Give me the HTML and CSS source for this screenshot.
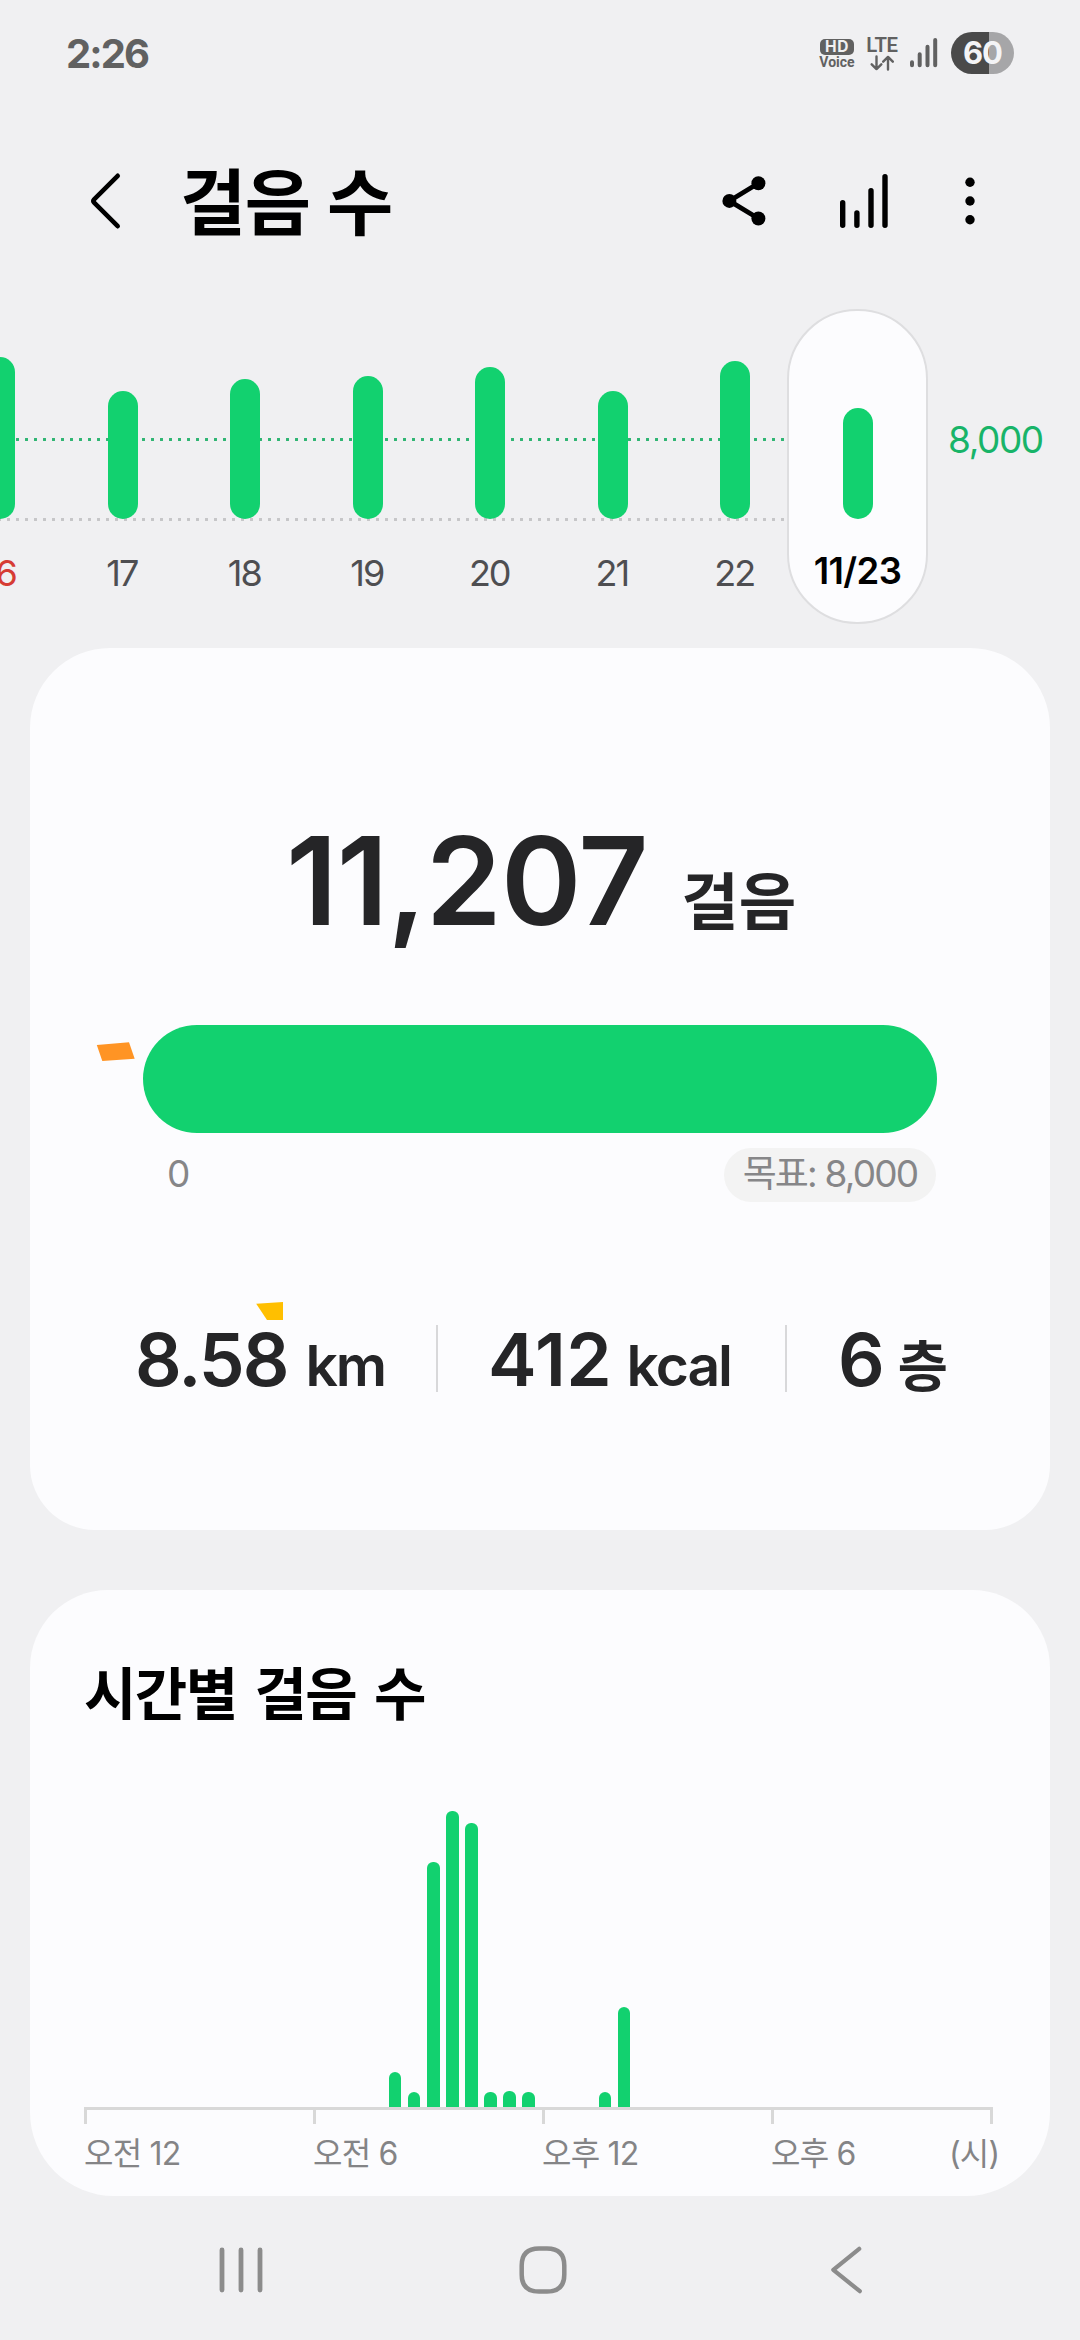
FILE: index.html
```html
<!DOCTYPE html>
<html lang="ko">
<head>
<meta charset="utf-8">
<title>걸음 수</title>
<link rel="stylesheet" href="styles.css">
</head>
<body>
<div class="status">
  <span class="clock">2:26</span>
  <div class="status-icons">
    <div class="hd"><span class="hd-badge">HD</span><span class="hd-voice">Voice</span></div>
    <div class="lte"><span class="lte-text">LTE</span>
      <svg width="24" height="16" viewBox="0 0 24 16" fill="none" stroke="#616161" stroke-width="2.4" stroke-linecap="round" stroke-linejoin="round"><path d="M6.5 1.5V14M1.7 9.3L6.5 14.1L11.3 9.3M18 14.5V2M13.2 6.7L18 1.9L22.8 6.7"/></svg>
    </div>
    <svg class="signal" width="28" height="32" viewBox="0 0 28 32" fill="none" stroke="#616161" stroke-width="4" stroke-linecap="round"><path d="M2 25.2V28.3M9.7 17.3V28.3M17.5 9.7V28.3M25.2 3V28.3"/></svg>
    <div class="battery">60</div>
  </div>
</div>
<header class="header">
  <svg class="back" width="32" height="60" viewBox="0 0 32 60" fill="none" stroke="#000" stroke-width="4.6" stroke-linecap="round" stroke-linejoin="round"><path d="M27.7 4.8L3.9 28.7Q2.6 30 3.9 31.3L27.7 55.2"/></svg>
  <h1 class="title">걸음 수</h1>
  <svg class="share" width="46" height="54" viewBox="0 0 46 54"><path d="M37.4 9.3L8.4 26.9L37.4 44.5" fill="none" stroke="#000" stroke-width="4.8"/><circle cx="37.4" cy="9.3" r="7"/><circle cx="8.4" cy="26.9" r="7"/><circle cx="37.4" cy="44.5" r="7"/></svg>
  <svg class="bars-icon" width="50" height="58" viewBox="0 0 50 58" fill="none" stroke="#000" stroke-width="5.4" stroke-linecap="round"><path d="M3.7 30.7V53.3M17.9 41V53.3M32 18.7V53.3M46 4.7V53.3"/></svg>
  <svg class="more" width="12" height="50" viewBox="0 0 12 50"><circle cx="6" cy="6.3" r="4.7"/><circle cx="6" cy="25" r="4.7"/><circle cx="6" cy="43.7" r="4.7"/></svg>
</header>
<section class="week">
  <div class="days">
    <div class="day sunday"><div class="track"><i style="height:162px"></i></div><span>16</span></div>
    <div class="day"><div class="track"><i style="height:128px"></i></div><span>17</span></div>
    <div class="day"><div class="track"><i style="height:140px"></i></div><span>18</span></div>
    <div class="day"><div class="track"><i style="height:143px"></i></div><span>19</span></div>
    <div class="day"><div class="track"><i style="height:152px"></i></div><span>20</span></div>
    <div class="day"><div class="track"><i style="height:128px"></i></div><span>21</span></div>
    <div class="day"><div class="track"><i style="height:158px"></i></div><span>22</span></div>
  </div>
  <div class="today"><div class="track"><i style="height:111px"></i></div><span>11/23</span></div>
  <span class="goal-line">8,000</span>
</section>
<section class="card summary">
  <div class="total"><span class="total-num">11,207</span><span class="total-unit">걸음</span></div>
  <div class="progress"></div>
  <div class="scale"><span class="zero">0</span><span class="goal">목표: 8,000</span></div>
  <div class="stats">
    <div class="stat distance"><b>8.58</b><span>km</span></div>
    <div class="stat calories"><b>412</b><span>kcal</span></div>
    <div class="stat floors"><b>6</b><span>층</span></div>
  </div>
  <svg class="confetti" width="1020" height="882" viewBox="30 648 1020 882"><path fill="#ff9424" d="M96.8 1045L129 1042.3L134.7 1058.7L102.3 1061Z"/><path fill="#ffbf00" d="M256.2 1303.7L283 1302V1320H267Z"/></svg>
</section>
<section class="card hourly">
  <h2 class="subtitle">시간별 걸음 수</h2>
  <div class="slots">
    <i></i><i></i><i></i><i></i><i></i><i></i><i></i><i></i><i></i><i></i><i></i><i></i><i></i><i></i><i></i><i></i>
    <i style="height:35px"></i><i style="height:14.7px"></i><i style="height:245px"></i><i style="height:296px"></i><i style="height:284px"></i><i style="height:14.7px"></i><i style="height:16px"></i><i style="height:14.7px"></i>
    <i></i><i></i><i></i><i style="height:14.7px"></i><i style="height:100px"></i><i></i><i></i><i></i>
    <i></i><i></i><i></i><i></i><i></i><i></i><i></i><i></i><i></i><i></i><i></i><i></i><i></i><i></i><i></i><i></i>
  </div>
  <div class="axis"><span>오전 12</span><span>오전 6</span><span>오후 12</span><span>오후 6</span><em>(시)</em></div>
</section>
<nav class="nav">
  <svg width="44" height="48" viewBox="0 0 44 48" fill="none" stroke="#8c8c8c" stroke-width="4.8" stroke-linecap="round"><path d="M3 3.9V44.1M22 3.9V44.1M41 3.9V44.1"/></svg>
  <svg width="50" height="48" viewBox="0 0 50 48" fill="none" stroke="#8c8c8c" stroke-width="4.5"><path d="M21 2.4H29Q46.3 2.4 46.3 19.5V28.5Q46.3 45.6 29 45.6H21Q3.7 45.6 3.7 28.5V19.5Q3.7 2.4 21 2.4Z"/></svg>
  <svg width="34" height="48" viewBox="0 0 34 48" fill="none" stroke="#8c8c8c" stroke-width="4.2" stroke-linecap="round" stroke-linejoin="round"><path d="M30.2 2.8L4.3 23.8L30.8 45.2"/></svg>
</nav>
</body>
</html>
```
FILE: styles.css
```css
* { box-sizing: border-box; }
body {
  margin: 0;
  width: 1080px;
  height: 2340px;
  overflow: hidden;
  background: #f0f0f2;
  color: #252527;
  font-family: Inter, "Noto Sans CJK KR", sans-serif;
  display: flex;
  flex-direction: column;
}
svg { display: block; flex: none; }
i, em { font-style: normal; }

/* status bar */
.status {
  flex: none;
  height: 106px;
  padding: 0 66px;
  display: flex;
  justify-content: space-between;
  align-items: center;
}
.clock { font-size: 40px; font-weight: 700; color: #616161; letter-spacing: -1.9px; }
.status-icons { display: flex; align-items: center; }
.hd { width: 34px; margin-right: 12px; padding-top: 3px; display: flex; flex-direction: column; align-items: center; }
.hd-badge {
  width: 34px; height: 16px; border-radius: 5px;
  background: #616161; color: #f0f0f2;
  font-size: 15.5px; line-height: 16px; font-weight: 700; text-align: center; letter-spacing: .5px;
}
.hd-voice { font-family: Roboto, sans-serif; font-size: 14px; line-height: 14.6px; font-weight: 700; color: #616161; }
.lte { width: 32px; margin-right: 11.5px; display: flex; flex-direction: column; align-items: center; }
.lte-text { font-family: Roboto, sans-serif; font-size: 20.3px; line-height: 18px; font-weight: 600; color: #616161; letter-spacing: -.4px; }
.lte svg { margin-top: 1px; }
.signal { margin-right: 13.5px; }
.battery {
  width: 63px; height: 42px; border-radius: 21px;
  background: linear-gradient(90deg, #4a4a4a 38px, #a6a6a8 38px);
  color: #f4f4f6; font-size: 31px; line-height: 41px; font-weight: 700; text-align: center; letter-spacing: -1px;
}

/* title bar */
.header { flex: none; height: 194px; padding-left: 90px; display: flex; align-items: flex-start; }
.back { margin-top: 65px; }
.title {
  margin: 47px 0 0 58px; width: 541px;
  font-size: 72px; line-height: 100px; font-weight: 700; color: #000; letter-spacing: -1.5px; word-spacing: 2px;
}
.share { margin-top: 68px; }
.bars-icon { margin: 66px 0 0 72px; }
.more { margin: 70px 0 0 75px; }

/* daily strip */
.week { flex: none; height: 348px; display: flex; align-items: flex-start; }
.days {
  flex: none; width: 857.5px; height: 348px; margin-left: -61px; display: flex;
  background:
    radial-gradient(circle, #2fb573 1.4px, transparent 2px) 2px 135px / 9px 9px repeat-x,
    radial-gradient(circle, #c6c6c8 1.4px, transparent 2px) 2px 215px / 9px 9px repeat-x;
}
.day, .today { display: flex; flex-direction: column; align-items: center; }
.day { width: 122.5px; }
.track { height: 219px; display: flex; align-items: flex-end; }
.track i { width: 30px; border-radius: 15px; background: #12d16f; }
.day span { margin-top: 30px; padding-right: 2px; font-size: 36px; line-height: 48px; letter-spacing: -2px; color: #4e4e51; }
.day.sunday span { color: #d63c34; }
.today {
  position: relative; flex: none;
  width: 141px; height: 315px; margin: 9px 0 0 -9.5px;
  border: 2px solid #dedee0; border-radius: 70px; background: #fcfcfe;
}
.today .track { height: 208px; }
.today span { margin-top: 28px; font-size: 36.5px; line-height: 48px; font-weight: 600; color: #000; letter-spacing: -.6px; }
.goal-line { margin: 116px 0 0 20px; font-size: 37px; line-height: 48px; letter-spacing: -1.4px; color: #18b469; }

/* cards */
.card { flex: none; position: relative; margin: 0 30px; background: #fcfcfe; }
.summary { height: 882px; border-radius: 80px 80px 65px 65px; padding: 153px 113px 0; }
.total { height: 160px; padding-left: 143px; display: flex; align-items: baseline; line-height: 160px; }
.total-num { font-size: 122px; font-weight: 600; letter-spacing: -.8px; }
.total-unit { margin-left: 33.5px; font-size: 62.5px; font-weight: 600; }
.progress { height: 108px; margin-top: 64px; border-radius: 54px; background: #12d16f; }
.scale { margin-top: 15px; display: flex; justify-content: space-between; font-size: 37px; line-height: 52px; color: #868688; letter-spacing: -1.8px; }
.zero { padding-left: 24px; }
.goal { width: 212px; height: 54px; margin-right: 1px; border-radius: 27px; background: #f3f3f3; text-align: center; }
.stats { margin-top: 123px; height: 67px; display: flex; }
.stat { flex: none; display: flex; align-items: baseline; line-height: 69px; }
.stat b { font-size: 73px; font-weight: 600; letter-spacing: -2px; }
.stat span { margin-left: 18px; font-size: 57px; font-weight: 600; letter-spacing: -2px; }
.distance { width: 303px; margin-left: -8px; border-right: 2px solid #d8d8da; }
.calories { width: 349px; padding-left: 50px; border-right: 2px solid #d8d8da; }
.calories b { letter-spacing: .6px; }
.calories span { margin-left: 14px; }
.floors { padding-left: 51px; }
.floors span { margin-left: 15px; font-size: 54.5px; }
.confetti { position: absolute; left: 0; top: 0; }

.hourly { height: 606px; margin-top: 60px; border-radius: 78px 78px 84px 84px; padding: 65px 57px 0 54px; }
.subtitle { margin: 0; font-size: 57px; line-height: 80px; font-weight: 700; color: #000; letter-spacing: -1.6px; word-spacing: 6px; }
.slots { height: 372px; display: flex; justify-content: space-between; align-items: flex-end; }
.slots i { width: 12.4px; border-radius: 6px 6px 0 0; background: #12d16f; }
.axis {
  height: 80px; border-top: 3px solid #d8d8d8; display: grid;
  grid-template-columns: 229px 229px 229px 1fr auto; color: #848486;
  font-size: 32px; line-height: 60px; letter-spacing: -.8px;
}
.axis span::before, .axis em::before { content: ""; display: block; width: 3px; height: 14px; background: #d8d8d8; }
.axis em { width: 44px; white-space: nowrap; }
.axis em::before { margin-left: auto; }

/* system navigation */
.nav { height: 144px; padding: 50px 0 0 219px; display: flex; align-items: flex-start; }
.nav svg + svg { margin-left: 255px; }
.nav svg + svg + svg { margin-left: 261px; }
```
